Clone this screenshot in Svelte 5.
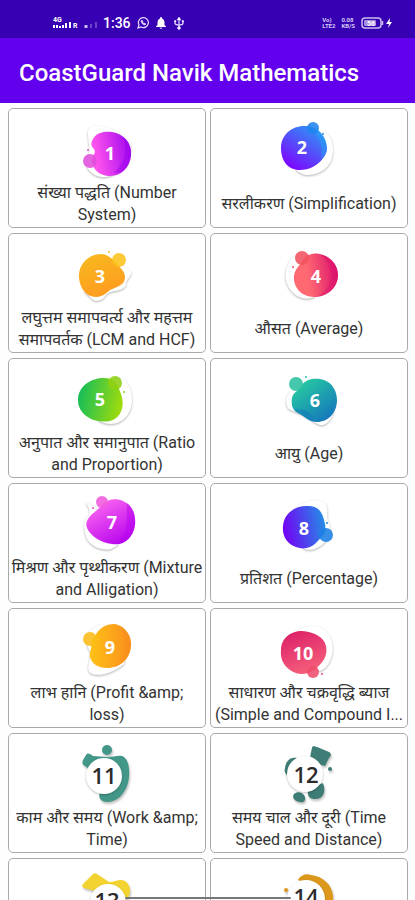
<script lang="ts">
  type Dot = [number, number, number];

  type Blob = {
    n: number;
    label: string;
    from: string;
    to: string;
    dir: number[];
    back: string;
    body: string;
    fold: string;
    ball: Dot;
    ballColor: string;
    dot?: Dot;
    num: [number, number];
  };

  type Badge = {
    n: number;
    label?: string;
    color: string;
    shapes: string[];
    dots: Dot[];
    disc: Dot;
    num: [number, number];
  };

  const blobs: Blob[] = [
    {
      n: 1,
      label: 'संख्या पद्धति (Number System)',
      from: '#ff55ee', to: '#9a00ee', dir: [0.1, 0.6, 1.1, 0.4],
      back: 'M21 14C20 6 30 4 38 7C49 10 60 16 64 26C63 43 48 59 34 57C24 55 16 46 21 38C24 30 21 22 21 14Z',
      body: 'M25 21C28 13 36 11 45 12C57 14 65 23 64 35C63 47 55 56 43 56C32 56 26 49 25 42C24 36 30 33 27 29C24 26 24 24 25 21Z',
      fold: 'M47 53C57 44 61 33 56 17C62 21 65 28 64 36C63 46 56 54 47 53Z',
      ball: [23, 41, 7], ballColor: '#e050dc', dot: [21, 30, 1],
      num: [43, 34]
    },
    {
      n: 2,
      label: 'सरलीकरण (Simplification)',
      from: '#8000ff', to: '#26a4f4', dir: [0.2, 1, 0.9, 0],
      back: 'M26 44C34 32 47 12 56 12C64 16 66 30 62 41C58 50 47 56 37 55C31 54 25 50 26 44Z',
      body: 'M12 28C12 14 24 5 37 6C51 7 58 19 58 29C57 39 45 50 31 50C19 50 12 41 12 28Z',
      fold: 'M40 6C52 8 58 19 58 29C58 33 55 37 52 40C54 27 51 15 40 6Z',
      ball: [44, 8, 6], ballColor: '#2183ee', dot: [54, 14, 1],
      num: [33, 28]
    },
    {
      n: 3,
      label: 'लघुत्तम समापवर्त्य और महत्तम समापवर्तक (LCM and HCF)',
      from: '#f7b91e', to: '#ff9b20', dir: [0.2, 0, 0.6, 1],
      back: 'M17 46C26 40 38 17 56 19C56 24 64 23 64 28C64 33 58 35 59 40C55 48 44 44 39 50C35 56 29 58 24 53Z',
      body: 'M12 33C11 19 22 9 34 9C41 9 47 15 51 20C54 24 58 26 58 33C57 40 49 42 43 45C38 49 35 52 29 52C19 52 13 43 12 33Z',
      fold: 'M32 51C36 44 41 39 50 40C54 40 56 38 58 35C57 41 49 42 43 45C39 48 36 51 32 51Z',
      ball: [52, 15, 7], ballColor: '#fcc21b', dot: [42, 7, 1],
      num: [33, 32]
    },
    {
      n: 4,
      label: 'औसत (Average)',
      from: '#ff6a72', to: '#dc126c', dir: [0.3, 0.5, 1, 0.4],
      back: 'M30 9C20 12 15 25 17 35C20 48 31 56 43 53C50 50 53 36 48 22C44 12 37 8 30 9Z',
      body: 'M34 15C38 8 47 7 54 10C63 13 69 21 69 30C69 42 59 52 45 52C32 52 24 42 25 31C26 23 31 21 34 15Z',
      fold: 'M50 9C66 20 67 40 48 52C61 50 69 41 69 30C69 19 60 10 50 9Z',
      ball: [33, 13, 7], ballColor: '#f0525d', dot: [24, 22, 1],
      num: [47, 32]
    },
    {
      n: 5,
      label: 'अनुपात और समानुपात (Ratio and Proportion)',
      from: '#15bd59', to: '#a2dc0b', dir: [0, 0.4, 1, 0.6],
      back: 'M30 47C41 36 38 17 52 8C60 8 65 20 65 30C65 43 56 54 44 54C37 54 30 51 30 47Z',
      body: 'M11 30C11 16 24 8 37 8C47 8 51 15 54 24C58 35 55 48 43 51C29 54 11 46 11 30Z',
      fold: 'M41 8C48 9 51 15 52 19C47 21 41 18 41 8Z',
      ball: [48, 13, 7], ballColor: '#8cd012', dot: [57, 22, 1],
      num: [33, 30]
    },
    {
      n: 6,
      label: 'आयु (Age)',
      from: '#27cca0', to: '#1474bd', dir: [0.1, 0.1, 0.8, 1],
      back: 'M24 20C17 23 15 34 20 39C25 42 31 43 38 47C44 51 49 56 54 55C61 53 65 45 65 36C59 24 39 12 24 20Z',
      body: 'M23 28C24 22 30 21 33 15C38 8 48 8 55 10C64 13 68 22 68 30C68 43 59 52 48 52C39 52 36 46 29 43C23 40 22 34 23 28Z',
      fold: 'M25 39C33 40 41 38 45 51C39 50 35 46 29 43C27 42 26 41 25 39Z',
      ball: [27, 14, 7], ballColor: '#2bbfa0', dot: [37, 7, 1],
      num: [46, 31]
    },
    {
      n: 7,
      label: 'मिश्रण और पृथ्थीकरण (Mixture and Alligation)',
      from: '#ff6cf0', to: '#b500ee', dir: [0.2, 0, 0.8, 1],
      back: 'M19 6C20 11 24 14 22 20C15 26 17 37 20 44C25 52 35 56 44 54C50 52 54 47 52 41C44 25 30 15 19 6Z',
      body: 'M20 26C23 19 29 17 35 10C40 4 49 3 56 6C65 10 69 19 68 30C66 43 57 51 45 49C33 48 23 40 20 33C19 30 19 28 20 26Z',
      fold: 'M48 49C62 42 59 27 60 8C67 13 69 22 68 30C66 42 58 50 48 49Z',
      ball: [35, 7, 6], ballColor: '#f05adc', dot: [26, 13, 1],
      num: [45, 28]
    },
    {
      n: 8,
      label: 'प्रतिशत (Percentage)',
      from: '#7400f4', to: '#248ce6', dir: [0, 0.6, 1, 0.4],
      back: 'M29 11C35 6 48 3 55 7C61 12 56 22 60 28C63 34 61 43 55 48C47 56 38 56 34 53Z',
      body: 'M14 31C15 18 27 10 39 11C51 11 54 19 56 29C58 36 52 43 47 48C42 53 34 55 27 52C18 49 13 41 14 31Z',
      fold: 'M50 36C52 34 55 33 57 33C58 37 54 42 51 44C50 42 49 39 50 36Z',
      ball: [57, 40, 7], ballColor: '#1c80e4', dot: [58, 28, 1],
      num: [35, 34]
    },
    {
      n: 9,
      label: 'लाभ हानि (Profit &amp;\nloss)',
      from: '#ffc116', to: '#f98f1e', dir: [0, 0.5, 1, 0.5],
      back: 'M35 5C24 6 17 15 21 28C27 36 19 44 22 52C30 59 48 52 57 44C61 31 52 9 35 5Z',
      body: 'M28 16C32 8 39 4 47 4C57 5 65 15 64 26C63 39 53 48 40 48C31 48 25 44 23 37C22 31 25 30 24 24C24 20 26 19 28 16Z',
      fold: 'M47 47C57 41 61 26 54 7C61 11 65 18 64 26C63 37 56 45 47 47Z',
      ball: [23, 19, 7], ballColor: '#fcbc18',
      num: [43, 28]
    },
    {
      n: 10,
      label: 'साधारण और चक्रवृद्धि ब्याज\n(Simple and Compound I...',
      from: '#dc2068', to: '#f6607c', dir: [0.2, 0, 0.6, 1],
      back: 'M28 12C34 5 46 4 54 9C63 15 66 28 62 38C60 45 54 51 50 51C43 44 47 20 28 12Z',
      body: 'M12 30C12 18 22 11 33 11C45 12 55 17 57 26C59 36 54 43 46 49C39 55 29 56 21 50C14 45 11 38 12 30Z',
      fold: 'M38 50C40 46 45 45 49 47C46 50 42 52 39 53Z',
      ball: [44, 52, 6], ballColor: '#ee4c6c', dot: [53, 54, 1],
      num: [34, 34]
    }
  ];

  const badges: Badge[] = [
    {
      n: 11,
      label: 'काम और समय (Work &amp; Time)',
      color: '#439789',
      shapes: [
        'M16 15L19 10C21 7 23 9 26 11L40 12L26 27L18 21C15 19 15 18 16 15Z',
        'M36 12C46 13 52 9 57 12C63 17 63 29 61 38C58 49 50 57 40 57C33 57 31 52 33 47C43 40 48 27 36 12Z'
      ],
      dots: [[40, 5, 5]],
      disc: [37, 31, 18],
      num: [37, 31]
    },
    {
      n: 12,
      label: 'समय चाल और दूरी (Time Speed and Distance)',
      color: '#3d7d75',
      shapes: [
        'M43 3C43 1 45 1 48 2L60 7C63 9 62 11 60 13L56 21L43 17C40 13 42 8 43 3Z',
        'M16 23C17 15 22 12 28 13L28 30L18 30C16 28 15 26 16 23Z',
        'M25 49C28 46 33 47 35 50C38 55 35 58 31 57C27 57 22 53 25 49Z',
        'M39 44L54 38C57 46 55 54 46 54C41 54 38 52 39 44Z'
      ],
      dots: [[61, 24, 2]],
      disc: [36, 29, 18],
      num: [37, 30]
    },
    {
      n: 13,
      color: '#f3d32f',
      shapes: [
        'M16 14L25 5C27 3 28 3 30 4L42 12C48 12 53 8 58 11C64 15 64 23 61 28L45 38L28 21L17 18C15 17 15 16 16 14Z'
      ],
      dots: [],
      disc: [41, 32, 18],
      num: [40, 31]
    },
    {
      n: 14,
      color: '#db981b',
      shapes: ['M29 10C31 6 36 3 42 5C53 6 63 14 64 26C65 38 57 50 45 53C55 37 50 15 29 10Z'],
      dots: [[17, 20, 2]],
      disc: [37, 29, 19],
      num: [37, 27]
    }
  ];
</script>

<div class="screen">
  <div class="status">
    <div class="left">
      <svg class="signal" width="46" height="14" viewBox="0 0 46 14" aria-hidden="true">
        <text x="0" y="6" class="tiny">4G</text>
        <path d="M1 9v3M4 9v3M7 10v2M10 9v3M13 7v5M17 6v6" stroke="#fff" stroke-width="2" />
        <text x="20" y="12" class="tiny">R</text>
        <path d="M33 9v3" stroke="#cbbdf0" stroke-width="3" />
        <path d="M38 8v4M43 6v6" stroke="#6844c7" stroke-width="2" />
      </svg>
      <span class="time">1:36</span>
      <svg width="12" height="12" viewBox="0 0 12 12" fill="none" stroke="#e8e0ff" aria-hidden="true">
        <path d="M1 11L2 8A5 5 0 1 1 4 10Z" stroke-width="1.2" />
        <path d="M4 4C4 6 6 8 8 8L9 7L7.500 6L7 6.500L5.500 5L6 4.500L5 3Z" fill="#e8e0ff" stroke-width=".5" />
      </svg>
      <svg width="12" height="12" viewBox="0 0 12 12" fill="#fff" aria-hidden="true">
        <path d="M6 0C7 0 7 1 7 1.500C9 2 9.500 4 9.500 6V8L11 9.500V10H1V9.500L2.500 8V6C2.500 4 3 2 5 1.500C5 1 5 0 6 0ZM4.500 10.700H7.500C7 12 5 12 4.500 10.700Z" />
      </svg>
      <svg width="12" height="13" viewBox="0 0 12 13" fill="none" stroke="#e8e0ff" aria-hidden="true">
        <path d="M6 2V11M2 4V6C2 8 4 8 6 8C8 8 10 8 10 6V4" stroke-width="1.200" />
        <path d="M6 0L8 3H4ZM1.500 3.500h1.500v1.500H1.500ZM9 3.500h1.500v1.500H9Z" fill="#fff" stroke-width=".5" />
        <circle cx="6" cy="11" r="1.300" fill="#fff" />
      </svg>
    </div>
    <div class="right">
      <span class="small">Vo)<br />LTE2</span>
      <span class="small">0.08<br />KB/S</span>
      <svg width="32" height="12" viewBox="0 0 32 12" aria-hidden="true">
        <rect x="1" y="1" width="19" height="10" rx="3" fill="none" stroke="#c9bdf0" stroke-width="1.500" />
        <rect x="3" y="3" width="12" height="6" rx="1" fill="#a58de0" />
        <path d="M21.500 4v4" stroke="#c9bdf0" stroke-width="1.500" />
        <text x="6" y="9" class="tiny">56</text>
        <path d="M29 1L25 7H28L27 11L31 5H28.500Z" fill="#fff" />
      </svg>
    </div>
  </div>

  <header>
    <h1>CoastGuard Navik Mathematics</h1>
  </header>

  <main>
    {#each blobs as b}
      <button class="card">
        <svg class="icon" width="80" height="60" viewBox="0 0 80 60">
          <defs>
            <linearGradient id="fill{b.n}" x1={b.dir[0]} y1={b.dir[1]} x2={b.dir[2]} y2={b.dir[3]}>
              <stop offset="0" stop-color={b.from} />
              <stop offset="1" stop-color={b.to} />
            </linearGradient>
          </defs>
          <path class="back" d={b.back} />
          <path d={b.body} fill="url(#fill{b.n})" />
          <path d={b.fold} fill={b.to} opacity=".45" />
          <circle cx={b.ball[0]} cy={b.ball[1]} r={b.ball[2]} fill={b.ballColor} opacity=".88" />
          {#if b.dot}
            <circle cx={b.dot[0]} cy={b.dot[1]} r={b.dot[2]} fill={b.ballColor} />
          {/if}
          <text class="num" x={b.num[0]} y={b.num[1] + 6}>{b.n}</text>
        </svg>
        <span class="label"><span class="lines">{b.label}</span></span>
      </button>
    {/each}

    {#each badges as b}
      <button class="card">
        <svg class="icon" width="80" height="60" viewBox="0 0 80 60">
          <g class="shade" fill={b.color}>
            {#each b.shapes as d}
              <path {d} />
            {/each}
            {#each b.dots as [x, y, r]}
              <circle cx={x} cy={y} {r} />
            {/each}
          </g>
          <circle class="disc" cx={b.disc[0]} cy={b.disc[1]} r={b.disc[2]} />
          <text class="num dark" x={b.num[0]} y={b.num[1] + 8}>{b.n}</text>
        </svg>
        {#if b.label}
          <span class="label"><span class="lines">{b.label}</span></span>
        {/if}
      </button>
    {/each}
  </main>

  <div class="gesture"></div>
</div>

<style>
  :global(body) {
    margin: 0;
    background: #fefefe;
  }

  .screen {
    display: flex;
    flex-direction: column;
    height: 100vh;
    overflow: hidden;
    font-family: Roboto, "Noto Sans", "Noto Sans Devanagari", sans-serif;
  }

  .status {
    flex: none;
    display: flex;
    justify-content: space-between;
    align-items: center;
    box-sizing: border-box;
    height: 38px;
    padding: 8px 22px 0 53px;
    background: #3700b3;
    color: #fff;
  }

  .left,
  .right {
    display: flex;
    align-items: center;
    gap: 6px;
  }

  .left .signal {
    margin-right: -2px;
  }

  .time {
    font-size: 14px;
    font-weight: 500;
    line-height: 16px;
  }

  .small {
    font-size: 6px;
    font-weight: 700;
    line-height: 6px;
    color: #d6ccf5;
  }

  .tiny {
    font-size: 7px;
    font-weight: 700;
    fill: #fff;
  }

  header {
    flex: none;
    display: flex;
    align-items: center;
    height: 65px;
    padding: 0 19px;
    background: #6200ee;
  }

  h1 {
    margin: 0;
    padding-top: 4px;
    color: #fff;
    font-size: 24px;
    font-weight: 500;
    line-height: 28px;
    white-space: nowrap;
  }

  main {
    flex: 1;
    min-height: 0;
    display: grid;
    grid-template-columns: 1fr 1fr;
    grid-auto-rows: 120px;
    gap: 5px 4px;
    padding: 5px 7px 0 8px;
    overflow: hidden;
  }

  .card {
    display: flex;
    flex-direction: column;
    align-items: center;
    gap: 2px;
    min-width: 0;
    padding: 11px 2px 0;
    border: 1px solid #aaa;
    border-radius: 5px;
    background: #fff;
    color: #333;
    font-family: inherit;
    font-size: 16px;
    line-height: 22px;
    cursor: pointer;
  }

  .icon {
    flex: none;
    overflow: visible;
  }

  .back {
    fill: #fff;
    filter: drop-shadow(0 1px 1px rgba(0, 0, 0, 0.3));
  }

  .shade {
    filter: drop-shadow(1px 2px 1px rgba(0, 0, 0, 0.25));
  }

  .disc {
    fill: #fff;
    filter: drop-shadow(0 1px 1px rgba(0, 0, 0, 0.25));
  }

  .num {
    fill: #fff;
    font-family: "Open Sans", sans-serif;
    font-size: 18px;
    font-weight: 700;
    text-anchor: middle;
  }

  .num.dark {
    fill: #2b2b2b;
    font-size: 22px;
    font-weight: 600;
  }

  .label {
    display: flex;
    align-items: center;
    width: 100%;
    height: 44px;
  }

  .lines {
    width: 100%;
    text-align: center;
    white-space: pre-line;
  }

  .gesture {
    position: fixed;
    bottom: 1px;
    left: 30%;
    right: 30%;
    height: 2px;
    border-radius: 1px;
    background: #777;
  }
</style>
